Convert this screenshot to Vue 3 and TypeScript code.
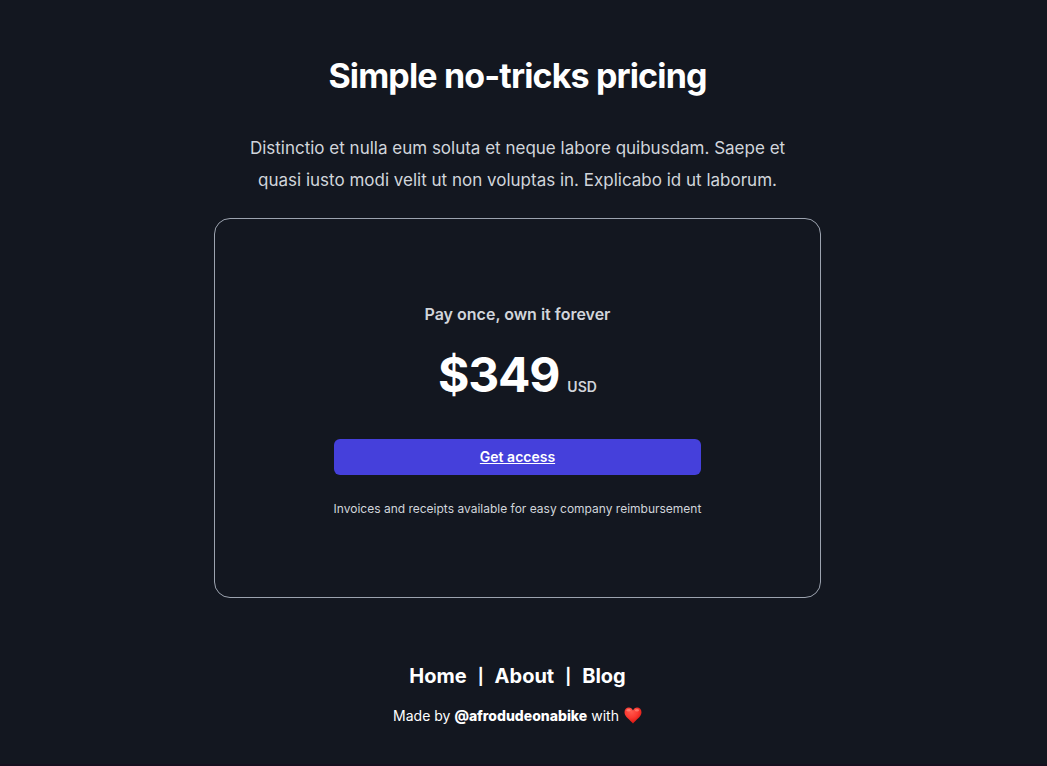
<script setup lang="ts">
interface NavLink {
  label: string
  href: string
}

const links: NavLink[] = [
  { label: 'Home', href: '#home' },
  { label: 'About', href: '#about' },
  { label: 'Blog', href: '#blog' },
]
const price = 349
</script>

<template>
  <div class="page">
    <main class="pricing">
      <h1 class="title">Simple no-tricks pricing</h1>
      <p class="intro">
        Distinctio et nulla eum soluta et neque labore quibusdam. Saepe et quasi iusto modi velit ut non voluptas in.
        Explicabo id ut laborum.
      </p>
      <section class="card">
        <div class="offer">
          <p class="tagline">Pay once, own it forever</p>
          <p class="price">
            <span class="amount">${{ price }}</span>
            <span class="currency">USD</span>
          </p>
          <a class="cta" href="#access">Get access</a>
          <p class="note">Invoices and receipts available for easy company reimbursement</p>
        </div>
      </section>
    </main>
    <footer class="footer">
      <nav class="nav">
        <template v-for="(link, index) in links" :key="link.label">
          <span v-if="index > 0" class="divider">|</span>
          <a :href="link.href">{{ link.label }}</a>
        </template>
      </nav>
      <p class="credit">
        <span>Made by <a href="#author">@afrodudeonabike</a> with</span>
        <svg class="heart" viewBox="0 0 18 18" role="img" aria-label="love">
          <defs>
            <radialGradient id="heart-fill" cx="0.4" cy="0.25" r="0.75">
              <stop offset="0" stop-color="#ff5a4e" />
              <stop offset="0.5" stop-color="#fb3a32" />
              <stop offset="1" stop-color="#d8150f" />
            </radialGradient>
          </defs>
          <path
            fill="url(#heart-fill)"
            d="M9 3.400C8.200 1.500 6.700.500 4.900.500 2.400.500.500 2.500.500 5.200c0 4.700 5.800 7.500 8.500 11.400 2.700-3.900 8.500-6.700 8.500-11.400C17.500 2.500 15.600.500 13.100.500 11.300.500 9.800 1.500 9 3.400z"
          />
          <ellipse cx="4.500" cy="3.200" rx="2" ry="1.200" fill="#ff9a8c" opacity="0.6" />
          <ellipse cx="13" cy="3.200" rx="2" ry="1.200" fill="#ff9a8c" opacity="0.6" />
        </svg>
      </p>
    </footer>
  </div>
</template>

<style>
body {
  background: #131720;
}
</style>

<style scoped>
.page {
  box-sizing: border-box;
  min-height: 100vh;
  padding: 56px 12px 36px 0;
  border-bottom: 2px solid #16101f;
  background: #131720;
  color: #fff;
  font-family: Inter, 'Liberation Sans', sans-serif;
  text-align: center;
}

h1,
p {
  margin: 0;
}

.pricing {
  display: flex;
  flex-direction: column;
  align-items: center;
}

.title {
  font-size: 34px;
  font-weight: 700;
  line-height: 40px;
  letter-spacing: -0.025em;
}

.intro {
  max-width: 560px;
  margin-top: 36px;
  color: #d1d5db;
  font-size: 17px;
  line-height: 32px;
}

.card {
  box-sizing: border-box;
  display: flex;
  justify-content: center;
  width: 100%;
  max-width: 607px;
  margin-top: 22px;
  padding: 83px 24px 78px;
  border: 1px solid #9ca3af;
  border-radius: 16px;
}

.offer {
  display: flex;
  flex-direction: column;
}

.tagline {
  color: #d1d5db;
  font-size: 16px;
  font-weight: 600;
  line-height: 24px;
}

.price {
  display: flex;
  justify-content: center;
  align-items: baseline;
  gap: 8px;
  margin-top: 25px;
}

.amount {
  font-size: 48px;
  font-weight: 700;
  line-height: 48px;
  letter-spacing: -0.025em;
}

.currency {
  color: #d1d5db;
  font-size: 14px;
  font-weight: 600;
  line-height: 24px;
}

.cta {
  margin-top: 40px;
  padding: 8px 12px;
  border-radius: 6px;
  background: #4540db;
  color: #fff;
  font-size: 14px;
  font-weight: 600;
  line-height: 20px;
  text-decoration: underline;
}

.note {
  margin-top: 24px;
  color: #d1d5db;
  font-size: 12px;
  line-height: 20px;
}

.footer {
  margin-top: 64px;
}

.nav {
  display: flex;
  justify-content: center;
  gap: 11px;
  font-size: 20px;
  font-weight: 700;
  line-height: 28px;
}

.divider {
  font-size: 16px;
}

.nav a {
  color: #fff;
  text-decoration: none;
}

.credit {
  display: flex;
  justify-content: center;
  align-items: center;
  gap: 5px;
  margin-top: 16px;
  font-size: 14px;
  line-height: 20px;
}

.credit a {
  color: #fff;
  font-weight: 800;
  text-decoration: none;
}

.heart {
  width: 18px;
  height: 18px;
}
</style>
